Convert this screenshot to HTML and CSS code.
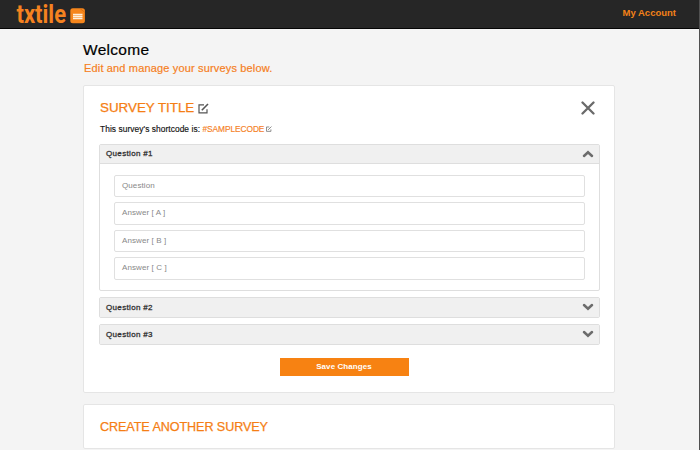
FILE: index.html
```
<!DOCTYPE html>
<html lang="en">
<head>
<meta charset="utf-8">
<title>txtile</title>
<link rel="stylesheet" href="styles.css">
</head>
<body>
<div class="page">
  <header class="topbar">
    <svg class="logo" width="72" height="28" viewBox="0 0 72 28" role="img" aria-label="txtile">
      <text class="logo-text" x="0.5" y="23" textLength="49.5" lengthAdjust="spacingAndGlyphs">txtile</text>
      <rect x="54.3" y="8.3" width="14.6" height="15" rx="2.5" fill="#f6861c"/>
      <path d="M64 8.5l5 4" stroke="#d96c0d" stroke-width=".8"/>
      <path d="M57 14.5h9.5M57 16.5h9.5M57 18.5h9.5" stroke="#fff0dc" stroke-width="1.5"/>
    </svg>
    <a class="account">My Account</a>
  </header>
  <main class="content">
    <h1 class="welcome">Welcome</h1>
    <p class="intro">Edit and manage your surveys below.</p>
    <section class="card survey">
      <div class="title-row">
        <h2 class="title">SURVEY TITLE</h2>
        <svg class="edit" width="11" height="11" viewBox="0 0 11 11"><path d="M6 1.8H1v8h8V6.2"/><path d="M3.8 7.2L10 1" stroke-width="1.6"/></svg>
        <svg class="close" width="14" height="14" viewBox="0 0 14 14"><path d="M1.5 1.5l11 11M12.5 1.5l-11 11"/></svg>
      </div>
      <p class="shortcode">This survey's shortcode is: <span class="code">#SAMPLECODE</span><svg class="edit small" width="6" height="6" viewBox="0 0 11 11"><path d="M6 1.8H1v8h8V6.2"/><path d="M3.8 7.2L10 1"/></svg></p>
      <div class="question open">
        <div class="bar"><span>Question #1</span><svg class="chev" width="12" height="8" viewBox="0 0 12 8"><path d="M2 6L6 2.3 10 6"/></svg></div>
        <div class="fields">
          <div class="field">Question</div>
          <div class="field">Answer [ A ]</div>
          <div class="field">Answer [ B ]</div>
          <div class="field">Answer [ C ]</div>
        </div>
      </div>
      <div class="question"><div class="bar"><span>Question #2</span><svg class="chev" width="12" height="8" viewBox="0 0 12 8"><path d="M2 2L6 5.7 10 2"/></svg></div></div>
      <div class="question"><div class="bar"><span>Question #3</span><svg class="chev" width="12" height="8" viewBox="0 0 12 8"><path d="M2 2L6 5.7 10 2"/></svg></div></div>
      <button class="save">Save Changes</button>
    </section>
    <section class="card create"><h2 class="title another">CREATE ANOTHER SURVEY</h2></section>
  </main>
</div>
</body>
</html>
```
FILE: styles.css
```
* { box-sizing: border-box; }
body { margin: 0; background: #f4f4f4; font-family: "Liberation Sans", Arial, sans-serif; color: #111; }
h1, h2, p { margin: 0; font-weight: normal; }
svg { display: block; fill: none; }
.page { height: 450px; overflow: hidden; border-right: 1px solid #505050; }
.topbar { height: 29px; background: #262626; border-bottom: 1px solid #050505; display: flex; justify-content: space-between; padding: 0 23px 0 16px; }
.logo-text { font: bold 26px Roboto, sans-serif; fill: #f58220; }
.account { font-size: 9.5px; font-weight: bold; line-height: 26px; color: #f28118; }
.content { width: 532px; margin-left: 83px; padding-top: 12px; }
.welcome { font-size: 15.5px; line-height: 18px; letter-spacing: .3px; color: #000; -webkit-text-stroke: .2px; }
.intro { font-size: 11px; line-height: 15px; letter-spacing: .16px; margin: 2px 0 9px 1px; color: #f5801e; -webkit-text-stroke: .2px; }
.card { background: #fff; border: 1px solid #e5e5e5; border-radius: 2px; }
.survey { height: 308px; padding: 13px 14px 0 15px; }
.title-row { display: flex; align-items: center; height: 18px; }
.title { font-size: 13.4px; line-height: 18px; letter-spacing: -.02px; margin-left: 1px; color: #f57e14; -webkit-text-stroke: .25px; }
.another { font-size: 12.6px; letter-spacing: -.08px; }
.edit { margin-left: 4px; stroke: #555; stroke-width: 1.2; }
.close { margin: 0 5px 0 auto; stroke: #6a6a6a; stroke-width: 2.3; stroke-linecap: round; }
.shortcode { display: flex; align-items: center; font-size: 8.4px; line-height: 12px; margin: 6px 0 0 1px; -webkit-text-stroke: .15px; letter-spacing: .06px; white-space: pre; }
.code { color: #f5801e; letter-spacing: -.08px; }
.edit.small { margin-left: 2px; }
.question { border: 1px solid #dedede; border-radius: 2px; margin-bottom: 6px; }
.open { height: 147px; margin-top: 9px; }
.bar { height: 19px; background: #f0f0f0; display: flex; align-items: center; justify-content: space-between; padding: 0 5px 1px 6px; font-size: 8px; letter-spacing: .34px; color: #333; -webkit-text-stroke: .3px; }
.open .bar { border-bottom: 1px solid #dedede; }
.chev { stroke: #6c6c6c; stroke-width: 2.5; stroke-linecap: round; }
.fields { display: flex; flex-direction: column; gap: 5px; padding: 11px 14px 0; }
.field { height: 22.4px; border: 1px solid #e0e0e0; border-radius: 2px; padding-left: 7px; font-size: 8px; line-height: 20px; letter-spacing: .1px; color: #888; }
.save { display: block; width: 129px; height: 18px; margin: 13px 0 0 181px; padding: 0 1px 1px 0; border: 0; background: #f78212; color: #fff; font: bold 8px/16px "Liberation Sans", Arial, sans-serif; letter-spacing: .08px; }
.create { height: 45px; margin-top: 11px; padding: 13px 15px; }
```
